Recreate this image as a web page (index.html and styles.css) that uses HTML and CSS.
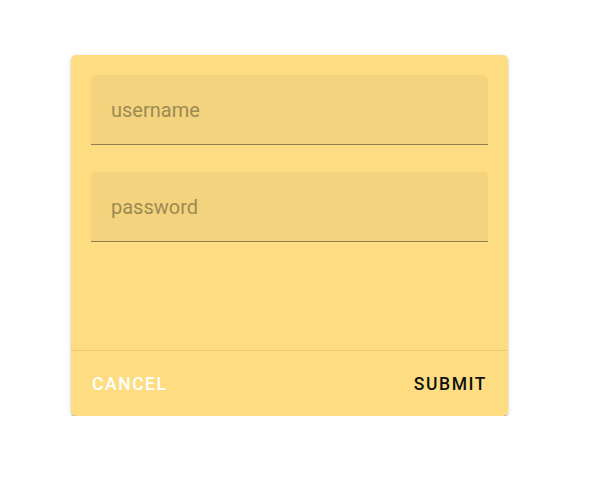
FILE: index.html
```html
<!DOCTYPE html>
<html lang="en">
<head>
<meta charset="utf-8">
<title>Login</title>
<link rel="stylesheet" href="styles.css">
</head>
<body>
<div class="page">
  <form class="card">
    <div class="card-text">
      <div class="field">
        <input class="field-input" type="text" placeholder="username">
      </div>
      <div class="field">
        <input class="field-input" type="password" placeholder="password">
      </div>
    </div>
    <div class="divider"></div>
    <div class="card-actions">
      <button type="button" class="btn btn-cancel">Cancel</button>
      <button type="button" class="btn btn-submit">Submit</button>
    </div>
  </form>
</div>
</body>
</html>
```
FILE: styles.css
```css
html, body {
  margin: 0;
  padding: 0;
  background: #ffffff;
}

body {
  font-family: Roboto, "Liberation Sans", sans-serif;
}

.page {
  padding: 55px 0 0 71px;
}

.card {
  width: 437px;
  background: #fedd82;
  border-radius: 5px;
  box-shadow: 0 3px 1px -2px rgba(0,0,0,0.25), 0 2px 2px 0 rgba(0,0,0,0.16), 0 1px 5px 0 rgba(0,0,0,0.12);
  display: flex;
  flex-direction: column;
}

.card-text {
  height: 295px;
  box-sizing: border-box;
  padding: 20px;
  display: flex;
  flex-direction: column;
  gap: 27px;
}

.field {
  height: 70px;
  box-sizing: border-box;
  background: #f3d37e;
  border-radius: 5px 5px 0 0;
  border-bottom: 1px solid #8f7d4d;
  display: flex;
  align-items: center;
  padding: 0 20px;
}

.field-input {
  width: 100%;
  border: 0;
  outline: none;
  background: transparent;
  font-family: Roboto, "Liberation Sans", sans-serif;
  font-size: 20px;
  line-height: 25px;
  padding: 2px 0 0 0;
  margin: 0;
  color: #3a3220;
}

.field-input::placeholder {
  color: #9c8a54;
  opacity: 1;
}

.divider {
  height: 1px;
  background: #e6c877;
}

.card-actions {
  height: 65px;
  box-sizing: border-box;
  padding: 10px;
  display: flex;
  align-items: center;
  justify-content: space-between;
}

.btn {
  height: 45px;
  border: 0;
  background: transparent;
  padding: 0 11px;
  font-family: Roboto, "Liberation Sans", sans-serif;
  font-size: 17.5px;
  font-weight: 500;
  letter-spacing: 0.0892em;
  text-transform: uppercase;
  cursor: pointer;
  border-radius: 5px;
}

.btn-cancel {
  color: #ffffff;
}

.btn-submit {
  color: #111111;
}
```
